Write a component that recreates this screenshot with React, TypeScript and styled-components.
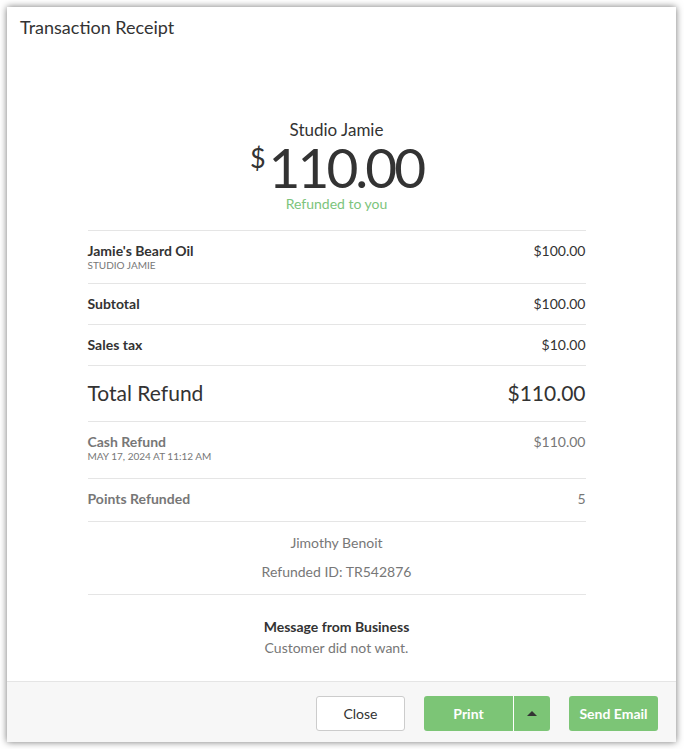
import styled, { createGlobalStyle } from "styled-components";

const GlobalStyle = createGlobalStyle`
  body {
    margin: 0;
    background: #fff;
    font-family: "Lato", "Liberation Sans", sans-serif;
    color: #333;
  }
`;

interface LineItem {
  label: string;
  sub?: string;
  amount: string;
}

const items: LineItem[] = [
  { label: "Jamie's Beard Oil", sub: "STUDIO JAMIE", amount: "$100.00" },
];

const App = () => {
  return (
    <>
      <GlobalStyle />
      <Modal>
        <Header>Transaction Receipt</Header>
        <Body>
          <Column>
            <Hero>
              <Business>Studio Jamie</Business>
              <Amount>
                <Currency>$</Currency>110.00
              </Amount>
              <Status>Refunded to you</Status>
            </Hero>
            {items.map((item) => (
              <Row key={item.label} $tall>
                <div>
                  <Label $strong>{item.label}</Label>
                  <Sub>{item.sub}</Sub>
                </div>
                <Value>{item.amount}</Value>
              </Row>
            ))}
            <Row>
              <Label $strong>Subtotal</Label>
              <Value>$100.00</Value>
            </Row>
            <Row>
              <Label $strong>Sales tax</Label>
              <Value>$10.00</Value>
            </Row>
            <TotalRow>
              <span>Total Refund</span>
              <span>$110.00</span>
            </TotalRow>
            <Row $tall $muted>
              <div>
                <Label $strong>Cash Refund</Label>
                <Sub>MAY 17, 2024 AT 11:12 AM</Sub>
              </div>
              <Value>$110.00</Value>
            </Row>
            <Row $muted $points>
              <Label $strong>Points Refunded</Label>
              <Value>5</Value>
            </Row>
            <Meta>
              <span>Jimothy Benoit</span>
              <span>Refunded ID: TR542876</span>
            </Meta>
            <Message>
              <strong>Message from Business</strong>
              <span>Customer did not want.</span>
            </Message>
          </Column>
        </Body>
        <Footer>
          <Button>Close</Button>
          <SplitGroup>
            <Button $primary $split>
              Print
            </Button>
            <Button $primary $caret aria-label="More print options">
              <Caret />
            </Button>
          </SplitGroup>
          <Button $primary>Send Email</Button>
        </Footer>
      </Modal>
    </>
  );
};
export default App;

const Modal = styled.div`
  margin: 7px;
  width: 669px;
  height: 735px;
  background: #fff;
  box-shadow: 0 0 7px rgba(0, 0, 0, 0.55);
  display: flex;
  flex-direction: column;
  overflow: hidden;
`;

const Header = styled.div`
  padding: 10px 13px 7px;
  font-size: 18px;
  line-height: 21px;
  height: 21px;
  color: #333;
`;

const Body = styled.div`
  flex: 1;
  padding-right: 10px;
  overflow: hidden;
`;

const Column = styled.div`
  width: 498px;
  margin: 0 auto;
`;

const Hero = styled.div`
  padding-top: 75px;
  padding-bottom: 18px;
  display: flex;
  flex-direction: column;
  align-items: center;
`;

const Business = styled.div`
  font-size: 17px;
  line-height: 20px;
  color: #333;
`;

const Amount = styled.div`
  font-size: 55px;
  line-height: 55px;
  color: #333;
  letter-spacing: -3px;
  display: flex;
  align-items: flex-start;
`;

const Currency = styled.span`
  font-size: 27px;
  line-height: 27px;
  margin-top: 4px;
  margin-right: 3px;
  letter-spacing: 0;
`;

const Status = styled.div`
  font-size: 14px;
  line-height: 17px;
  color: #7cc47c;
`;

const Row = styled.div<{ $tall?: boolean; $muted?: boolean; $points?: boolean }>`
  display: flex;
  justify-content: space-between;
  align-items: flex-start;
  border-top: 1px solid #e5e5e5;
  padding: 11px 0 ${(p) => (p.$points ? "14px" : p.$tall && p.$muted ? "16px" : "12px")};
  color: ${(p) => (p.$muted ? "#777" : "#333")};
`;

const Label = styled.div<{ $strong?: boolean }>`
  font-size: 14px;
  line-height: 17px;
  font-weight: ${(p) => (p.$strong ? 700 : 400)};
`;

const Sub = styled.div`
  font-size: 10px;
  line-height: 12px;
  color: #777;
  text-transform: uppercase;
`;

const Value = styled.div`
  font-size: 14px;
  line-height: 17px;
`;

const TotalRow = styled.div`
  display: flex;
  justify-content: space-between;
  border-top: 1px solid #e5e5e5;
  padding: 15px 0 16px;
  font-size: 21px;
  line-height: 24px;
  color: #333;
`;

const Meta = styled.div`
  border-top: 1px solid #e5e5e5;
  border-bottom: 1px solid #e5e5e5;
  padding: 12px 0 14px;
  display: flex;
  flex-direction: column;
  align-items: center;
  gap: 12px;
  font-size: 14px;
  line-height: 17px;
  color: #777;
`;

const Message = styled.div`
  padding-top: 23px;
  display: flex;
  flex-direction: column;
  align-items: center;
  gap: 4px;
  font-size: 14px;
  line-height: 17px;
  color: #777;
  strong {
    color: #333;
    font-weight: 700;
  }
`;

const Footer = styled.div`
  height: 61px;
  flex-shrink: 0;
  border-top: 1px solid #e5e5e5;
  background: #f7f7f7;
  display: flex;
  justify-content: flex-end;
  align-items: flex-start;
  padding: 14px 18px 0 0;
  box-sizing: border-box;
  gap: 19px;
`;

const SplitGroup = styled.div`
  display: flex;
`;

const Button = styled.button<{ $primary?: boolean; $split?: boolean; $caret?: boolean }>`
  height: 35px;
  width: ${(p) => (p.$caret ? "37px" : "89px")};
  border-radius: ${(p) => (p.$split ? "3px 0 0 3px" : p.$caret ? "0 3px 3px 0" : "3px")};
  border: ${(p) => (p.$primary ? "none" : "1px solid #ccc")};
  border-left: ${(p) => (p.$caret ? "1px solid #fff" : undefined)};
  background: ${(p) => (p.$primary ? "#7cc576" : "#fff")};
  color: ${(p) => (p.$primary ? "#fff" : "#333")};
  font-family: inherit;
  font-size: 14px;
  font-weight: ${(p) => (p.$primary ? 700 : 400)};
  padding: 0;
  display: flex;
  align-items: center;
  justify-content: center;
  cursor: pointer;
`;

const Caret = styled.span`
  width: 0;
  height: 0;
  border-left: 5px solid transparent;
  border-right: 5px solid transparent;
  border-bottom: 5px solid #333;
`;
